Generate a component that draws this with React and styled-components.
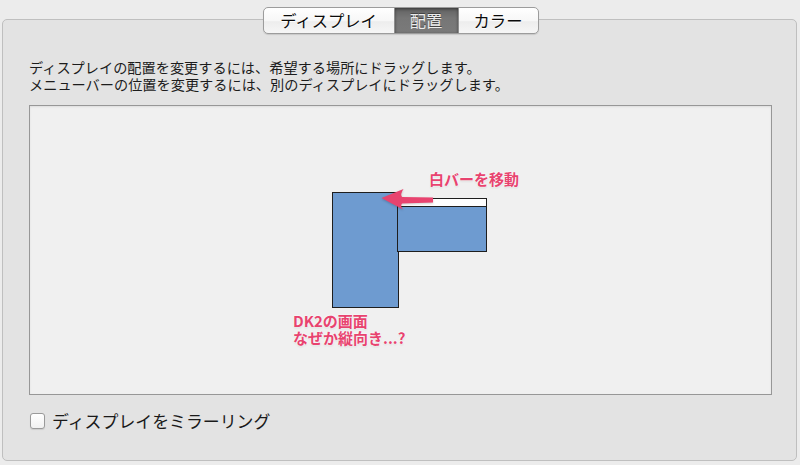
import React from "react";
import styled, { createGlobalStyle } from "styled-components";

const Global = createGlobalStyle`
  html, body { margin: 0; padding: 0; background: #ececec; }
  body { font-family: "Noto Sans CJK JP", "Noto Sans", sans-serif; }
`;

const Page = styled.div`
  width: 800px;
  height: 465px;
  box-sizing: border-box;
  padding: 19px 3px 4px 2px;
  background: #ececec;
  display: flex;
`;

const Panel = styled.div`
  flex: 1;
  box-sizing: border-box;
  border: 1px solid #bfbfbf;
  border-radius: 5px;
  background: #e3e3e3;
  padding: 0 24px 0 26px;
  display: flex;
  flex-direction: column;
`;

const TabBar = styled.div`
  align-self: center;
  margin-top: -13px;
  display: flex;
  height: 27px;
  box-sizing: border-box;
  border: 1px solid #9c9c9c;
  border-radius: 5px;
  overflow: hidden;
  box-shadow: 0 1px 1px rgba(0,0,0,0.12);
  background: linear-gradient(#ffffff, #f7f7f7 50%, #ededed 55%, #f6f6f6);
`;

const Tab = styled.div`
  width: ${p => p.$w}px;
  box-sizing: border-box;
  display: flex;
  align-items: center;
  justify-content: center;
  font-size: 16.3px;
  line-height: 1;
  color: ${p => (p.$active ? "#ececec" : "#0a0a0a")};
  text-shadow: ${p => (p.$active ? "0 -1px 0 #444" : "0 1px 0 #fff")};
  background: ${p => (p.$active ? "linear-gradient(#626262, #767676 40%, #7a7a7a)" : "transparent")};
  box-shadow: ${p => (p.$active ? "inset 0 1px 3px rgba(0,0,0,0.45)" : "none")};
  border-left: ${p => (p.$first ? "none" : "1px solid #8e8e8e")};
`;

const Description = styled.div`
  margin-top: 25px;
  font-size: 14.2px;
  line-height: 17px;
  color: #1c1c1c;
`;

const Arrangement = styled.div`
  margin-top: 12px;
  height: 290px;
  box-sizing: border-box;
  border: 1px solid #979797;
  background: #f0f0f0;
  box-shadow: inset 0 1px 2px rgba(0,0,0,0.08);
  position: relative;
`;

const Display = styled.div`
  position: absolute;
  left: ${p => p.$x}px;
  top: ${p => p.$y}px;
  width: ${p => p.$w}px;
  height: ${p => p.$h}px;
  box-sizing: border-box;
  border: 1px solid #1e1e1e;
  background: #6e9bd0;
  display: flex;
  flex-direction: column;
`;

const MenuBar = styled.div`
  height: 7px;
  flex: none;
  background: #ffffff;
  border-bottom: 1px solid #1e1e1e;
`;

const Note = styled.div`
  position: absolute;
  left: ${p => p.$x}px;
  top: ${p => p.$y}px;
  font-size: 15px;
  font-weight: 700;
  line-height: 17px;
  color: #e8436f;
  white-space: nowrap;
  text-shadow: 0 0 2px #fff, 0 0 2px #fff, 0 1px 2px rgba(0,0,0,0.15);
`;

const Overlay = styled.svg`
  position: absolute;
  left: 0;
  top: 0;
  width: 100%;
  height: 100%;
  pointer-events: none;
  overflow: visible;
`;

const CheckRow = styled.label`
  margin-top: 16px;
  margin-left: 1px;
  display: flex;
  align-items: center;
  gap: 7px;
  font-size: 16.9px;
  line-height: 20px;
  color: #1a1a1a;
`;

const Box = styled.span`
  width: 15px;
  height: 16px;
  box-sizing: border-box;
  border: 1px solid #9a9a9a;
  border-radius: 3px;
  background: linear-gradient(#ffffff, #f1f1f1);
  box-shadow: 0 1px 1px rgba(0,0,0,0.1);
  flex: none;
`;

export default function App() {
  return (
    <>
      <Global />
      <Page>
        <Panel>
          <TabBar>
            <Tab $w={130} $first>ディスプレイ</Tab>
            <Tab $w={64} $active>配置</Tab>
            <Tab $w={80}>カラー</Tab>
          </TabBar>
          <Description>
            ディスプレイの配置を変更するには、希望する場所にドラッグします。
            <br />
            メニューバーの位置を変更するには、別のディスプレイにドラッグします。
          </Description>
          <Arrangement>
            <Display $x={302} $y={86} $w={67} $h={116} />
            <Display $x={367} $y={92} $w={90} $h={54}>
              <MenuBar />
            </Display>
            <Overlay>
              <path
                d="M351.5 92 L373.5 83 Q370 88 372 91 L403 91.5 L403 96.5 L372 97.5 Q370 100 373 103.5 Z"
                fill="#e8436f"
                style={{ filter: "drop-shadow(0 1px 1px rgba(0,0,0,0.2))" }}
              />
            </Overlay>
            <Note $x={399} $y={64}>白バーを移動</Note>
            <Note $x={263} $y={206}>
              DK2の画面
              <br />
              なぜか縦向き...?
            </Note>
          </Arrangement>
          <CheckRow>
            <Box />
            ディスプレイをミラーリング
          </CheckRow>
        </Panel>
      </Page>
    </>
  );
}
